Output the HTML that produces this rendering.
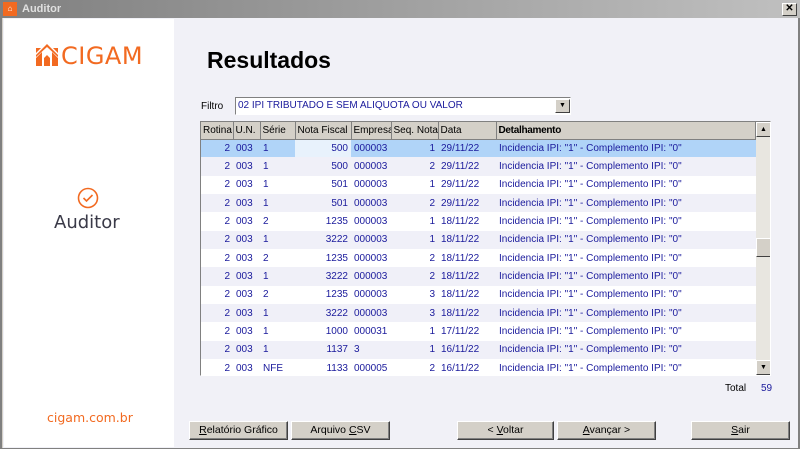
<!DOCTYPE html><html><head><style>
*{margin:0;padding:0;box-sizing:border-box}
body{width:800px;height:449px;overflow:hidden;background:#808080;font-family:"Liberation Sans",sans-serif;font-size:11px;position:relative}
.a{position:absolute}
#tb{left:0;top:0;width:800px;height:18px;background:linear-gradient(90deg,#808080,#c0c0c0)}
#win{left:2px;top:18px;width:796px;height:430px;background:#f1f1f7;border-left:1px solid #d4d0c8}
#left{left:4px;top:19px;width:170px;height:428px;background:#fff}
.btn{position:absolute;top:421px;height:19px;background:#d4d0c8;border:1px solid;border-color:#fff #404040 #404040 #fff;box-shadow:inset -1px -1px 0 #808080;text-align:center;line-height:17px;color:#000;font-family:"Liberation Sans",sans-serif;font-size:10.5px}
table{border-collapse:collapse;font-family:"Liberation Sans",sans-serif;font-size:10px;color:#1a1a9c}
td{height:18.35px;padding:0 3px;white-space:nowrap;overflow:hidden}
th{height:17px;background:#d4d0c8;border-right:1px solid #808080;border-bottom:1px solid #808080;font-weight:normal;text-align:left;padding:0 2px;color:#000;white-space:nowrap;overflow:hidden}
.r{text-align:right}
tr:nth-child(odd) td{background:#f0f0f8}
tr:nth-child(even) td{background:#fff}
tr.sel td{background:#b0d4f8}
</style></head><body>
<div id="tb" class="a"></div>
<div class="a" style="left:3px;top:2px;width:14px;height:14px;background:#f26a21;color:#fff;font-size:8px;line-height:14px;text-align:center">⌂</div>
<div class="a" style="left:22px;top:3px;color:#e0e0e0;font-weight:bold;font-size:11px">Auditor</div>
<div class="a" style="left:782px;top:3px;width:15px;height:13px;background:#d4d0c8;border:1px solid;border-color:#fff #404040 #404040 #fff;font-size:10px;line-height:10px;text-align:center;font-weight:bold">✕</div>
<div id="win" class="a"></div>
<div id="left" class="a"></div>
<svg class="a" style="left:36px;top:44px" width="22" height="22" viewBox="0 0 22 22"><path d="M0 4h5l-5 5zM22 4h-5l5 5zM11 0l11 11v2L11 3 0 13v-2zM0 14l6-6v14H0zM22 14l-6-6v14h6zM8 14l3-3 3 3v8H8z" fill="#f26a21"/></svg>
<div class="a" style="left:61px;top:42px;color:#f26a21;font-size:24px;letter-spacing:0.5px;font-family:'DejaVu Sans',sans-serif">CIGAM</div>
<svg class="a" style="left:77px;top:187px" width="22" height="22" viewBox="0 0 22 22"><circle cx="11" cy="11" r="9.5" fill="none" stroke="#f26a21" stroke-width="1.6"/><path d="M6.5 11l3 3 6-6" fill="none" stroke="#f26a21" stroke-width="1.6"/></svg>
<div class="a" style="left:54px;top:212px;color:#3a3a48;font-size:18px;font-family:'DejaVu Sans',sans-serif">Auditor</div>
<div class="a" style="left:47px;top:410px;color:#f26a21;font-size:12.5px;font-family:'DejaVu Sans',sans-serif">cigam.com.br</div>
<div class="a" style="left:207px;top:47px;font-size:23px;font-weight:bold">Resultados</div>
<div class="a" style="left:201px;top:101px;font-size:10px">Filtro</div>
<div class="a" style="left:235px;top:97px;width:336px;height:18px;background:#fff;border:1px solid;border-color:#808080 #fff #fff #808080"></div>
<div class="a" style="left:238px;top:100px;color:#1a1a9c;font-size:10px">02 IPI TRIBUTADO E SEM ALIQUOTA OU VALOR</div>
<div class="a" style="left:555px;top:99px;width:15px;height:14px;background:#d4d0c8;border:1px solid;border-color:#fff #404040 #404040 #fff;font-size:7px;text-align:center;line-height:12px">▼</div>
<div class="a" style="left:200px;top:121px;width:571px;height:255px;border:1px solid;border-color:#808080 #fff #fff #808080;background:#fff;overflow:hidden">
<table style="width:555px;table-layout:fixed">
<colgroup><col style="width:32px"><col style="width:27px"><col style="width:35px"><col style="width:56px"><col style="width:40px"><col style="width:47px"><col style="width:58px"><col></colgroup>
<tr><th>Rotina</th><th>U.N.</th><th>Série</th><th>Nota Fiscal</th><th>Empresa</th><th>Seq. Nota</th><th>Data</th><th style="font-weight:bold;letter-spacing:-0.3px">Detalhamento</th></tr>
<tr class="sel"><td class="r">2</td><td>003</td><td>1</td><td class="r" style="background:#e8f2fc">500</td><td>000003</td><td class="r">1</td><td>29/11/22</td><td>Incidencia IPI: "1" - Complemento IPI: "0"</td></tr>
<tr><td class="r">2</td><td>003</td><td>1</td><td class="r">500</td><td>000003</td><td class="r">2</td><td>29/11/22</td><td>Incidencia IPI: "1" - Complemento IPI: "0"</td></tr>
<tr><td class="r">2</td><td>003</td><td>1</td><td class="r">501</td><td>000003</td><td class="r">1</td><td>29/11/22</td><td>Incidencia IPI: "1" - Complemento IPI: "0"</td></tr>
<tr><td class="r">2</td><td>003</td><td>1</td><td class="r">501</td><td>000003</td><td class="r">2</td><td>29/11/22</td><td>Incidencia IPI: "1" - Complemento IPI: "0"</td></tr>
<tr><td class="r">2</td><td>003</td><td>2</td><td class="r">1235</td><td>000003</td><td class="r">1</td><td>18/11/22</td><td>Incidencia IPI: "1" - Complemento IPI: "0"</td></tr>
<tr><td class="r">2</td><td>003</td><td>1</td><td class="r">3222</td><td>000003</td><td class="r">1</td><td>18/11/22</td><td>Incidencia IPI: "1" - Complemento IPI: "0"</td></tr>
<tr><td class="r">2</td><td>003</td><td>2</td><td class="r">1235</td><td>000003</td><td class="r">2</td><td>18/11/22</td><td>Incidencia IPI: "1" - Complemento IPI: "0"</td></tr>
<tr><td class="r">2</td><td>003</td><td>1</td><td class="r">3222</td><td>000003</td><td class="r">2</td><td>18/11/22</td><td>Incidencia IPI: "1" - Complemento IPI: "0"</td></tr>
<tr><td class="r">2</td><td>003</td><td>2</td><td class="r">1235</td><td>000003</td><td class="r">3</td><td>18/11/22</td><td>Incidencia IPI: "1" - Complemento IPI: "0"</td></tr>
<tr><td class="r">2</td><td>003</td><td>1</td><td class="r">3222</td><td>000003</td><td class="r">3</td><td>18/11/22</td><td>Incidencia IPI: "1" - Complemento IPI: "0"</td></tr>
<tr><td class="r">2</td><td>003</td><td>1</td><td class="r">1000</td><td>000031</td><td class="r">1</td><td>17/11/22</td><td>Incidencia IPI: "1" - Complemento IPI: "0"</td></tr>
<tr><td class="r">2</td><td>003</td><td>1</td><td class="r">1137</td><td>3</td><td class="r">1</td><td>16/11/22</td><td>Incidencia IPI: "1" - Complemento IPI: "0"</td></tr>
<tr><td class="r">2</td><td>003</td><td>NFE</td><td class="r">1133</td><td>000005</td><td class="r">2</td><td>16/11/22</td><td>Incidencia IPI: "1" - Complemento IPI: "0"</td></tr>
</table>
<div class="a" style="left:555px;top:0;width:15px;height:253px;background:#e8e6e0"></div>
<div class="a" style="left:555px;top:0;width:15px;height:15px;background:#d4d0c8;border:1px solid;border-color:#fff #404040 #404040 #fff;font-size:7px;text-align:center;line-height:13px">▲</div>
<div class="a" style="left:555px;top:116px;width:15px;height:19px;background:#d4d0c8;border:1px solid;border-color:#fff #404040 #404040 #fff"></div>
<div class="a" style="left:555px;top:238px;width:15px;height:15px;background:#d4d0c8;border:1px solid;border-color:#fff #404040 #404040 #fff;font-size:7px;text-align:center;line-height:13px">▼</div>
</div>
<div class="a" style="left:725px;top:383px;font-size:10px">Total</div>
<div class="a" style="left:761px;top:383px;font-size:10px;color:#1a1a9c">59</div>
<div class="btn" style="left:189px;width:99px"><u>R</u>elatório Gráfico</div>
<div class="btn" style="left:291px;width:99px">Arquivo <u>C</u>SV</div>
<div class="btn" style="left:457px;width:97px">&lt; <u>V</u>oltar</div>
<div class="btn" style="left:557px;width:99px"><u>A</u>vançar &gt;</div>
<div class="btn" style="left:691px;width:99px"><u>S</u>air</div>
</body></html>
